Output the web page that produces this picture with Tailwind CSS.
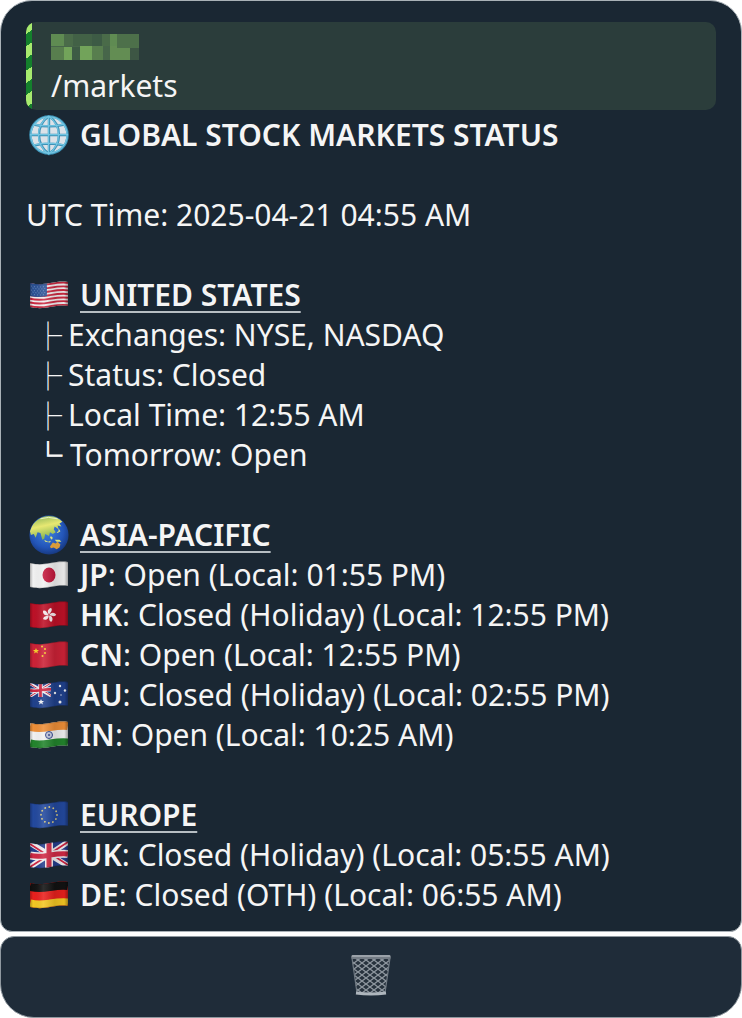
<!DOCTYPE html>
<html lang="en">
<head>
  <meta charset="UTF-8">
  <meta name="viewport" content="width=device-width, initial-scale=1">
  <title>Markets</title>
  <script src="https://cdn.jsdelivr.net/npm/@tailwindcss/browser@4"></script>
</head>
<body class="bg-white font-['Noto_Sans','Noto_Sans_CJK_SC',sans-serif] text-3xl leading-10 text-[#f5f5f5] antialiased">

  <!-- Shared shapes for the flags -->
  <svg class="absolute size-0" aria-hidden="true">
    <defs>
      <path id="wave" d="M0 0C9 2 14 1 20 0S32-2 38-1"/>
      <clipPath id="flag"><path d="M0 2C9 4 14 3 20 2S32 0 38 1V25C32 24 26 25 20 26S9 28 0 26Z"/></clipPath>
      <linearGradient id="shade">
        <stop offset="0" stop-color="#000" stop-opacity=".28"/>
        <stop offset=".08" stop-color="#000" stop-opacity="0"/>
        <stop offset=".35" stop-color="#fff" stop-opacity=".12"/>
        <stop offset=".65" stop-color="#000" stop-opacity=".12"/>
        <stop offset=".9" stop-color="#000" stop-opacity=".05"/>
        <stop offset="1" stop-color="#000" stop-opacity=".35"/>
      </linearGradient>
      <g id="gloss">
        <path d="M0 0H38V28H0Z" fill="url(#shade)"/>
        <path d="M0 2C9 4 14 3 20 2S32 0 38 1M0 26C9 28 14 27 20 26S32 24 38 25" fill="none" stroke="#000" stroke-opacity=".25"/>
      </g>
      <path id="star" d="M0-3L.9-1H3L1.3.4L2 2.6L0 1.3L-2 2.6L-1.3.4L-3-1H-.9Z"/>
      <path id="petal" d="M0-.5C-2.8-2.2-2.4-6 .6-7.2C2.8-5.600 1.200-3 0-.5Z"/>
      <g id="union">
        <path d="M0 0H38V28H0Z" fill="#253f8e"/>
        <path d="M0 2L38 25M0 26L38 1" stroke="#f1eef0" stroke-width="5.500"/>
        <path d="M0 3L17 14M21 13L38 24M0 26L17 15M21 12L38 1" stroke="#cf2543" stroke-width="1.800"/>
        <path d="M19 0V28M0 14.500C9 16.500 14 15 20 14S32 12 38 13" fill="none" stroke="#f1eef0" stroke-width="8"/>
        <path d="M19 0V28M0 14.500C9 16.500 14 15 20 14S32 12 38 13" fill="none" stroke="#d02945" stroke-width="5"/>
      </g>
    </defs>
  </svg>

  <main class="flex min-h-screen flex-col gap-1">
    <article class="rounded-t-[32px] rounded-b-xl border border-[#a9b1b7] bg-[#1a2733] px-[25px] pt-[21px] pb-4">

      <!-- Quoted command -->
      <blockquote class="mb-[5px] flex overflow-hidden rounded-[10px] bg-[#2b3d3b]">
        <div class="w-1.5 bg-[repeating-linear-gradient(145deg,#a7eb6e_0_10px,#14802c_10px_20px)]"></div>
        <div class="px-[19px] pt-3 pb-1">
          <svg class="mb-1.5 h-[26px] w-[88px]" viewBox="0 0 88 26" shape-rendering="crispEdges" role="img" aria-label="Hidden name">
            <path fill="#47664a" d="M0 0H88V26H0Z"/>
            <path fill="#5f8b52" d="M0 0H13V12H0ZM59 0H66V12H59Z"/>
            <path fill="#4a6b49" d="M13 0H22V12H13ZM51 0H59V12H51Z"/>
            <path fill="#426146" d="M22 0H41V12H22Z"/>
            <path fill="#3d5b45" d="M41 0H51V12H41ZM21 13H29V26H21Z"/>
            <path fill="#4d704a" d="M66 0H88V14H66Z"/>
            <path fill="#587e4e" d="M0 13H13V26H0ZM41 12H52V26H41Z"/>
            <path fill="#72a35a" d="M13 13H21V26H13ZM29 12H41V26H29Z"/>
            <path fill="#638d53" d="M59 12H66V14H79V26H59Z"/>
            <path fill="#3d5644" d="M79 14H88V26H79Z"/>
          </svg>
          <p>/markets</p>
        </div>
      </blockquote>

      <h1 class="flex items-center gap-2.5 pl-0.5 font-semibold">
        <svg class="h-10 w-[42px] shrink-0 overflow-visible" viewBox="0 0 42 42" aria-hidden="true">
          <circle cx="21" cy="21" r="20" fill="#dce2e8"/>
          <g fill="none" stroke="#3d91b5" stroke-width="2.500">
            <circle cx="21" cy="21" r="19.500"/>
            <path d="M21 1V41M1 21H41M5 10Q21 14 37 10M5 32Q21 28 37 32"/>
            <path d="M21 1C7 11 7 31 21 41C35 31 35 11 21 1"/>
          </g>
          <g fill="none" stroke="#72c5e2" stroke-width="1.300">
            <circle cx="21" cy="21" r="19"/>
            <path d="M20.500 1V41M1 20.500H41M5 9.500Q21 13.500 37 9.500M5 31.500Q21 27.500 37 31.500"/>
            <path d="M20.500 1C6.500 11 6.500 31 20.500 41C34.500 31 34.500 11 20.500 1"/>
          </g>
        </svg>
        GLOBAL STOCK MARKETS STATUS
      </h1>

      <p class="mt-10">UTC Time: 2025-04-21 04:55 AM</p>

      <!-- United States -->
      <section class="mt-10">
        <h2 class="flex items-center gap-2.5 pl-0.5 font-semibold">
          <svg class="h-7 w-[42px] shrink-0" viewBox="-2 0 42 28" aria-hidden="true">
            <g clip-path="url(#flag)">
              <path d="M0 0H38V28H0Z" fill="#f3eff0"/>
              <g fill="none" stroke="#cd2a42" stroke-width="1.900">
                <use href="#wave" y="3"/><use href="#wave" y="6.700"/><use href="#wave" y="10.400"/><use href="#wave" y="14.100"/>
                <use href="#wave" y="17.800"/><use href="#wave" y="21.500"/><use href="#wave" y="25.200"/>
              </g>
              <path d="M0 0H17V15Q8 17 0 15Z" fill="#2c5295"/>
              <g fill="none" stroke="#7f9cc9" stroke-width=".8" stroke-dasharray="1 2">
                <path d="M1 5Q9 7 17 5M2.500 7Q9 9 17 7M1 9Q9 11 17 9M2.500 11Q9 13 17 11M1 13Q9 15 17 13"/>
              </g>
              <use href="#gloss"/>
            </g>
          </svg>
          <span class="underline decoration-[#b7bec3] decoration-2 underline-offset-[5px]">UNITED STATES</span>
        </h2>
        <ul class="pl-2">
          <li class="flex gap-1.5"><span class="font-['Noto_Sans_CJK_SC',sans-serif] text-[28px] font-light">├</span>Exchanges: NYSE, NASDAQ</li>
          <li class="flex gap-1.5"><span class="font-['Noto_Sans_CJK_SC',sans-serif] text-[28px] font-light">├</span>Status: Closed</li>
          <li class="flex gap-1.5"><span class="font-['Noto_Sans_CJK_SC',sans-serif] text-[28px] font-light">├</span>Local Time: 12:55 AM</li>
          <li class="flex gap-2"><span class="font-['Noto_Sans_CJK_SC',sans-serif] text-[28px] [-webkit-text-stroke:1px_#f5f5f5]">└</span>Tomorrow: Open</li>
        </ul>
      </section>

      <!-- Asia-Pacific -->
      <section class="mt-10">
        <h2 class="flex items-center gap-2.5 pl-0.5 font-semibold">
          <svg class="h-10 w-[42px] shrink-0 overflow-visible" viewBox="0 0 42 42" aria-hidden="true">
            <defs>
              <radialGradient id="sea" cx=".45" cy=".4" r=".6">
                <stop offset="0" stop-color="#3f83e0"/>
                <stop offset=".7" stop-color="#2355b8"/>
                <stop offset="1" stop-color="#173a83"/>
              </radialGradient>
              <linearGradient id="land" x2=".3" y2="1">
                <stop offset="0" stop-color="#7fae55"/>
                <stop offset=".5" stop-color="#e7e872"/>
                <stop offset="1" stop-color="#83b352"/>
              </linearGradient>
            </defs>
            <circle cx="21" cy="21" r="20.500" fill="url(#sea)"/>
            <path fill="url(#land)" d="M3 12C7 5 14 1 21 1C27 1 32 4 35 7L32 9L34 12L30 11L31 15L27 12L26 15L28 18L25 20L22 18L21 22L17 20L16 25L14 26L12 19L9 18L7 24L5 20L2 21L1 17Z"/>
            <path fill="#dbe57d" d="M31 14L33 17L30 19L29 18L31 17ZM23 22L25 24L24 26L22 24ZM16 26L20 28L23 27L22 29L17 28ZM27 26L32 26L34 28L29 28Z"/>
            <path fill="#d99c38" d="M22 33L25 29L28 30L30 28L33 31L32 34L29 36L26 34L23 35Z"/>
            <path fill="none" stroke="#e9f2c9" stroke-width="1" d="M12 4Q20 1 30 4"/>
          </svg>
          <span class="underline decoration-[#b7bec3] decoration-2 underline-offset-[5px]">ASIA-PACIFIC</span>
        </h2>
        <ul class="pl-0.5">
          <li class="flex items-center gap-2.5">
            <svg class="h-7 w-[42px] shrink-0" viewBox="-2 0 42 28" aria-hidden="true">
              <g clip-path="url(#flag)">
                <path d="M0 0H38V28H0Z" fill="#f2f2f2"/>
                <ellipse cx="19" cy="14" rx="6.500" ry="7.500" fill="#c4183c"/>
                <use href="#gloss"/>
              </g>
            </svg>
            <span><b class="font-semibold">JP</b>: Open (Local: 01:55 PM)</span>
          </li>
          <li class="flex items-center gap-2.5">
            <svg class="h-7 w-[42px] shrink-0" viewBox="-2 0 42 28" aria-hidden="true">
              <g clip-path="url(#flag)">
                <path d="M0 0H38V28H0Z" fill="#bd1127"/>
                <g fill="#f6e9ec" transform="translate(19 14)">
                  <use href="#petal" transform="rotate(12)"/><use href="#petal" transform="rotate(84)"/><use href="#petal" transform="rotate(156)"/>
                  <use href="#petal" transform="rotate(228)"/><use href="#petal" transform="rotate(300)"/>
                </g>
                <use href="#gloss"/>
              </g>
            </svg>
            <span><b class="font-semibold">HK</b>: Closed (Holiday) (Local: 12:55 PM)</span>
          </li>
          <li class="flex items-center gap-2.5">
            <svg class="h-7 w-[42px] shrink-0" viewBox="-2 0 42 28" aria-hidden="true">
              <g clip-path="url(#flag)">
                <path d="M0 0H38V28H0Z" fill="#cd2237"/>
                <g fill="#f6cf2d">
                  <use href="#star" transform="translate(6 10)"/>
                  <circle cx="12" cy="5.500" r="1"/><circle cx="15" cy="8" r="1"/><circle cx="15" cy="12" r="1"/><circle cx="12.500" cy="15" r="1"/>
                </g>
                <use href="#gloss"/>
              </g>
            </svg>
            <span><b class="font-semibold">CN</b>: Open (Local: 12:55 PM)</span>
          </li>
          <li class="flex items-center gap-2.5">
            <svg class="h-7 w-[42px] shrink-0" viewBox="-2 0 42 28" aria-hidden="true">
              <g clip-path="url(#flag)">
                <path d="M0 0H38V28H0Z" fill="#20418c"/>
                <svg x="0" y="2" width="21" height="14" viewBox="0 1 38 26" preserveAspectRatio="none"><use href="#union"/></svg>
                <g fill="#f2f4f8">
                  <use href="#star" transform="translate(11 21)"/>
                  <circle cx="30" cy="5" r="1.200"/><circle cx="25" cy="12" r="1.200"/><circle cx="35" cy="9.500" r="1.200"/>
                  <circle cx="31" cy="14" r=".7"/><circle cx="30" cy="21" r="1.500"/>
                </g>
                <use href="#gloss"/>
              </g>
            </svg>
            <span><b class="font-semibold">AU</b>: Closed (Holiday) (Local: 02:55 PM)</span>
          </li>
          <li class="flex items-center gap-2.5">
            <svg class="h-7 w-[42px] shrink-0" viewBox="-2 0 42 28" aria-hidden="true">
              <g clip-path="url(#flag)">
                <path d="M0 0H38V28H0Z" fill="#f2f2f2"/>
                <g fill="none" stroke-width="9">
                  <use href="#wave" y="5.500" stroke="#ee8f38"/>
                  <use href="#wave" y="23" stroke="#23852d"/>
                </g>
                <circle cx="19" cy="14" r="3.500" fill="#c5cbe0" stroke="#33468e"/>
                <circle cx="19" cy="14" r="1" fill="#33468e"/>
                <use href="#gloss"/>
              </g>
            </svg>
            <span><b class="font-semibold">IN</b>: Open (Local: 10:25 AM)</span>
          </li>
        </ul>
      </section>

      <!-- Europe -->
      <section class="mt-10">
        <h2 class="flex items-center gap-2.5 pl-0.5 font-semibold">
          <svg class="h-7 w-[42px] shrink-0" viewBox="-2 0 42 28" aria-hidden="true">
            <g clip-path="url(#flag)">
              <path d="M0 0H38V28H0Z" fill="#23499e"/>
              <circle cx="19" cy="14" r="8" fill="none" stroke="#d9c982" stroke-width="1.800" stroke-linecap="round" stroke-dasharray=".1 4.090"/>
              <use href="#gloss"/>
            </g>
          </svg>
          <span class="underline decoration-[#b7bec3] decoration-2 underline-offset-[5px]">EUROPE</span>
        </h2>
        <ul class="pl-0.5">
          <li class="flex items-center gap-2.5">
            <svg class="h-7 w-[42px] shrink-0" viewBox="-2 0 42 28" aria-hidden="true">
              <g clip-path="url(#flag)">
                <use href="#union"/>
                <use href="#gloss"/>
              </g>
            </svg>
            <span><b class="font-semibold">UK</b>: Closed (Holiday) (Local: 05:55 AM)</span>
          </li>
          <li class="flex items-center gap-2.5">
            <svg class="h-7 w-[42px] shrink-0" viewBox="-2 0 42 28" aria-hidden="true">
              <g clip-path="url(#flag)">
                <path d="M0 0H38V28H0Z" fill="#e9201d"/>
                <g fill="none" stroke-width="9">
                  <use href="#wave" y="5.500" stroke="#121212"/>
                  <use href="#wave" y="23" stroke="#f5c823"/>
                </g>
                <use href="#gloss"/>
              </g>
            </svg>
            <span><b class="font-semibold">DE</b>: Closed (OTH) (Local: 06:55 AM)</span>
          </li>
        </ul>
      </section>
    </article>

    <button type="button" aria-label="Delete" class="flex h-[82px] items-center justify-center rounded-t-[14px] rounded-b-[34px] border border-[#8f989f] bg-[#1f2c39] pb-0.5">
      <svg class="h-11 w-[42px]" viewBox="0 0 42 44" aria-hidden="true">
        <defs>
          <pattern id="mesh" width="8" height="6" patternUnits="userSpaceOnUse">
            <path d="M0 0L8 6M8 0L0 6" fill="none" stroke="#8e979f" stroke-width="1.300"/>
          </pattern>
        </defs>
        <path d="M2 4H40L35 40H7Z" fill="#27323d"/>
        <path d="M2 4H40L35 40H7Z" fill="url(#mesh)"/>
        <path d="M2 4L7 39M40 4L35 39" stroke="#6f7982" stroke-width="1.200"/>
        <path d="M6 39Q21 41 36 39" fill="none" stroke="#aeb6bd" stroke-width="3"/>
        <rect x="1" y="1" width="40" height="4" rx="2" fill="#737b84"/>
        <path d="M2 2H40" stroke="#c3c9ce"/>
      </svg>
    </button>
  </main>

</body>
</html>
